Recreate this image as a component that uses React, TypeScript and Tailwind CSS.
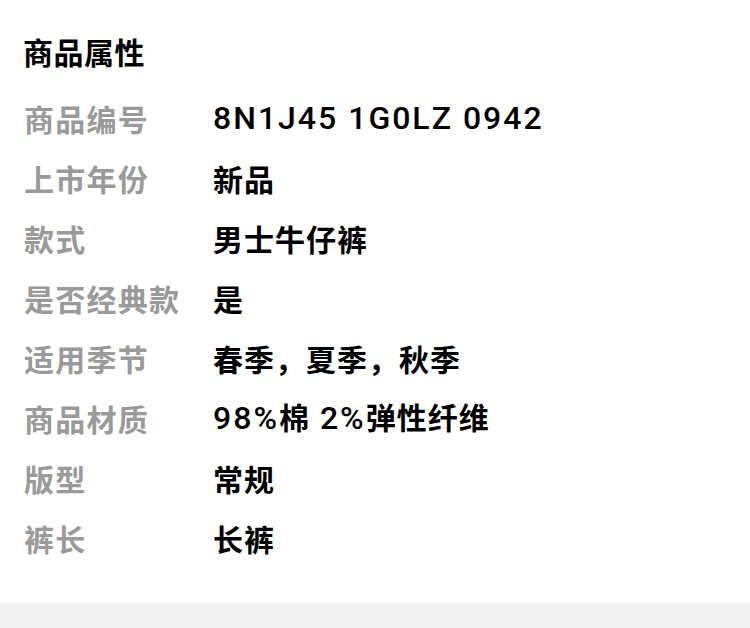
const rows: { label: string; value: string }[] = [
  { label: "商品编号", value: "8N1J45 1G0LZ 0942" },
  { label: "上市年份", value: "新品" },
  { label: "款式", value: "男士牛仔裤" },
  { label: "是否经典款", value: "是" },
  { label: "适用季节", value: "春季，夏季，秋季" },
  { label: "商品材质", value: "98%棉 2%弹性纤维" },
  { label: "版型", value: "常规" },
  { label: "裤长", value: "长裤" },
];

// latin runs are set a bit larger, like the source font does
function Value({ text }: { text: string }) {
  const parts = text.match(/[\x20-\x7e]+|[^\x20-\x7e]+/g) ?? [];
  return (
    <>
      {parts.map((p, i) =>
        /^[\x20-\x7e]+$/.test(p) ? (
          <span key={i} className="font-['Roboto',sans-serif] text-[32px] font-medium tracking-[2px]">
            {p}
          </span>
        ) : (
          <span key={i}>{p}</span>
        )
      )}
    </>
  );
}

export default function App() {
  return (
    <div className="w-[750px] h-[628px] bg-white overflow-hidden font-['Noto_Sans_CJK_SC',sans-serif]">
      <div className="px-6 pt-[21px]">
        <div className="-ml-px h-[60px] flex items-center text-[30px] font-bold tracking-[0.5px] text-black">
          商品属性
        </div>
        <div className="mt-[7px]">
          {rows.map((row) => (
            <div key={row.label} className="h-[60px] flex items-center">
              <div className="w-[189px] shrink-0 text-[30px] font-bold tracking-[1.25px] text-[#9a9a9a]">
                {row.label}
              </div>
              <div className="text-[30px] font-bold tracking-[1px] text-black whitespace-nowrap">
                <Value text={row.value} />
              </div>
            </div>
          ))}
        </div>
      </div>
      <div className="mt-[35px] h-[60px] bg-[#f2f2f2]" />
    </div>
  );
}
